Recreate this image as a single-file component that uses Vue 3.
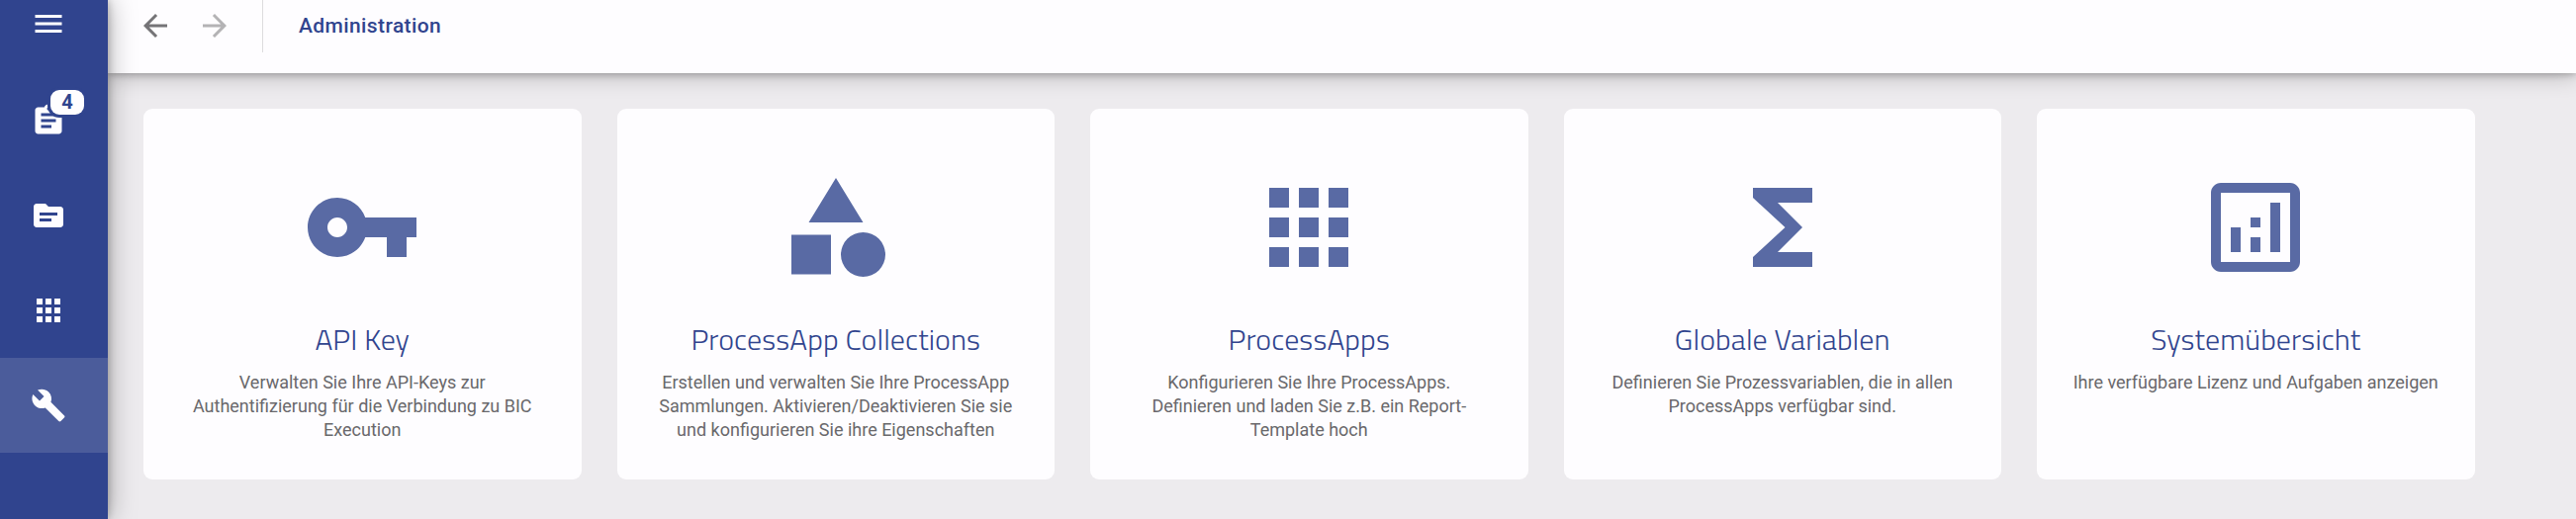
<template>
  <div class="app-shell">
    <nav class="sidebar">
      <button class="nav-item menu-btn" title="Menü">
        <svg class="nav-icon" viewBox="0 0 24 24"><path :d="icons.menu" /></svg>
      </button>
      <button
        v-for="item in navItems"
        :key="item.icon"
        class="nav-item"
        :class="{ 'is-active': item.icon === activeItem }"
        :title="item.title"
        @click="activeItem = item.icon"
      >
        <span class="icon-wrap">
          <svg class="nav-icon" viewBox="0 0 24 24"><path :d="icons[item.icon]" /></svg>
          <span v-if="item.badge" class="badge">{{ item.badge }}</span>
        </span>
      </button>
    </nav>

    <div class="main">
      <header class="toolbar">
        <button class="history-btn" title="Zurück">
          <svg class="nav-icon" viewBox="0 0 24 24"><path :d="icons.back" /></svg>
        </button>
        <button class="history-btn" title="Vorwärts" disabled>
          <svg class="nav-icon" viewBox="0 0 24 24"><path :d="icons.forward" /></svg>
        </button>
        <span class="divider"></span>
        <h1 class="page-title">Administration</h1>
      </header>

      <main class="tiles">
        <article v-for="tile in tiles" :key="tile.title" class="tile">
          <svg class="tile-icon" viewBox="0 0 24 24"><path :d="icons[tile.icon]" /></svg>
          <h2 class="tile-title">{{ tile.title }}</h2>
          <p class="tile-text">{{ tile.text }}</p>
        </article>
      </main>
    </div>
  </div>
</template>

<script setup>
import { ref } from 'vue';

const icons = {
  menu: 'M3 18h18v-2H3v2zm0-5h18v-2H3v2zm0-7v2h18V6H3z',
  back: 'M20 11H7.83l5.59-5.59L12 4l-8 8 8 8 1.41-1.41L7.83 13H20v-2z',
  forward: 'M12 4l-1.41 1.41L16.17 11H4v2h12.17l-5.58 5.59L12 20l8-8z',
  tasks: 'M19 3h-4.18C14.4 1.84 13.3 1 12 1c-1.3 0-2.4.84-2.82 2H5c-1.1 0-2 .9-2 2v14c0 1.1.9 2 2 2h14c1.1 0 2-.9 2-2V5c0-1.1-.9-2-2-2zm-7 0c.55 0 1 .45 1 1s-.45 1-1 1-1-.45-1-1 .45-1 1-1zm2 14H7v-2h7v2zm3-4H7v-2h10v2zm0-4H7V7h10v2z',
  cases: 'M20 6h-8l-2-2H4c-1.1 0-1.99.9-1.99 2L2 18c0 1.1.9 2 2 2h16c1.1 0 2-.9 2-2V8c0-1.1-.9-2-2-2zm-6 10H6v-2h8v2zm4-4H6v-2h12v2z',
  apps: 'M4 8h4V4H4v4zm6 12h4v-4h-4v4zm-6 0h4v-4H4v4zm0-6h4v-4H4v4zm6 0h4v-4h-4v4zm6-10v4h4V4h-4zm-6 4h4V4h-4v4zm6 6h4v-4h-4v4zm0 6h4v-4h-4v4z',
  build: 'M22.7 19l-9.1-9.1c.9-2.3.4-5-1.5-6.9-2-2-5-2.4-7.4-1.3L9 6 6 9 1.6 4.7C.4 7.1.9 10.1 2.9 12.1c1.9 1.9 4.6 2.4 6.9 1.5l9.1 9.1c.4.4 1 .4 1.4 0l2.3-2.3c.5-.4.5-1.1.1-1.4z',
  key: 'M12.65 10C11.83 7.67 9.61 6 7 6c-3.31 0-6 2.69-6 6s2.69 6 6 6c2.61 0 4.83-1.67 5.65-4H17v4h4v-4h2v-4H12.65zM7 14c-1.1 0-2-.9-2-2s.9-2 2-2 2 .9 2 2-.9 2-2 2z',
  category: 'M12 2l-5.5 9h11zM17.5 13a4.5 4.5 0 1 0 0 9 4.5 4.5 0 0 0 0-9zM3 13.5h8v8H3z',
  functions: 'M18 4H6v2l6.5 6L6 18v2h12v-3h-7l5-5-5-5h7z',
  analytics: 'M19 3H5c-1.1 0-2 .9-2 2v14c0 1.1.9 2 2 2h14c1.1 0 2-.9 2-2V5c0-1.1-.9-2-2-2zm0 16H5V5h14v14zM7 12h2v5H7zM15 7h2v10h-2zM11 14h2v3h-2zM11 10h2v2h-2z'
};

const activeItem = ref('build');

const navItems = [
  { icon: 'tasks', title: 'Aufgaben', badge: 4 },
  { icon: 'cases', title: 'Fälle' },
  { icon: 'apps', title: 'ProcessApps' },
  { icon: 'build', title: 'Administration' }
];

const tiles = [
  {
    icon: 'key',
    title: 'API Key',
    text: 'Verwalten Sie Ihre API-Keys zur Authentifizierung für die Verbindung zu BIC Execution'
  },
  {
    icon: 'category',
    title: 'ProcessApp Collections',
    text: 'Erstellen und verwalten Sie Ihre ProcessApp Sammlungen. Aktivieren/Deaktivieren Sie sie und konfigurieren Sie ihre Eigenschaften'
  },
  {
    icon: 'apps',
    title: 'ProcessApps',
    text: 'Konfigurieren Sie Ihre ProcessApps. Definieren und laden Sie z.B. ein Report-Template hoch'
  },
  {
    icon: 'functions',
    title: 'Globale Variablen',
    text: 'Definieren Sie Prozessvariablen, die in allen ProcessApps verfügbar sind.'
  },
  {
    icon: 'analytics',
    title: 'Systemübersicht',
    text: 'Ihre verfügbare Lizenz und Aufgaben anzeigen'
  }
];
</script>

<style>
body {
  margin: 0;
  overflow: hidden;
}
</style>

<style scoped>
.app-shell {
  display: flex;
  height: 100vh;
  overflow: hidden;
  background-color: #edebee;
  font-family: Roboto, "Liberation Sans", sans-serif;
}

button {
  margin: 0;
  padding: 0;
  border: none;
  background: none;
  color: inherit;
  font: inherit;
  cursor: pointer;
}

/* Sidebar */
.sidebar {
  z-index: 2;
  display: flex;
  flex-direction: column;
  flex: none;
  width: 109px;
  background-color: #30448e;
  color: #fefdff;
  box-shadow: 0 0 8px rgba(0, 0, 0, 0.25), 0 0 26px rgba(0, 0, 0, 0.35);
}

.nav-item {
  display: flex;
  align-items: center;
  height: 96px;
  padding-left: 31px;
}

.nav-item.is-active {
  background-color: #4b5c9b;
}

.menu-btn {
  height: 48px;
  margin-bottom: 26px;
}

.nav-icon {
  display: block;
  width: 36px;
  height: 36px;
  fill: currentColor;
}

.icon-wrap {
  position: relative;
}

.badge {
  position: absolute;
  top: -13px;
  left: 20px;
  width: 34px;
  height: 25px;
  border-radius: 9px;
  background-color: #fefdff;
  box-shadow: 0 0 0 3px #30448e;
  color: #30448e;
  font-size: 20px;
  font-weight: 700;
  line-height: 25px;
  text-align: center;
}

/* Toolbar */
.main {
  flex: 1;
  min-width: 0;
}

.toolbar {
  display: flex;
  align-items: center;
  box-sizing: border-box;
  height: 74px;
  padding: 0 0 22px 30px;
  background-color: #fefdff;
  box-shadow: 0 0 8px rgba(0, 0, 0, 0.3), 0 0 24px rgba(0, 0, 0, 0.3);
}

.history-btn {
  margin-right: 24px;
  color: #757477;
}

.history-btn:disabled {
  color: #b4b3b5;
  cursor: default;
}

.divider {
  align-self: flex-start;
  width: 1px;
  height: 53px;
  margin-left: 6px;
  background-color: #dddcde;
}

.page-title {
  margin: 0 0 0 36px;
  color: #30448e;
  font-size: 21px;
  font-weight: 500;
  line-height: 30px;
  letter-spacing: 0.4px;
}

/* Tiles */
.tiles {
  display: flex;
  gap: 36px;
  padding: 36px;
}

.tile {
  display: flex;
  flex-direction: column;
  align-items: center;
  flex: none;
  box-sizing: border-box;
  width: 442.5px;
  height: 375px;
  padding: 60px 36px 0;
  border-radius: 9px;
  background-color: #fefdff;
  text-align: center;
}

.tile-icon {
  flex: none;
  width: 120px;
  height: 120px;
  fill: #596aa4;
}

.tile-title {
  margin: 35px 0 0;
  color: #30448e;
  font-family: "Titillium Web", Roboto, sans-serif;
  font-size: 30px;
  font-weight: 300;
  line-height: 36px;
  letter-spacing: 0.1px;
}

.tile-text {
  margin: 14px 0 0;
  color: #69686b;
  font-size: 18px;
  line-height: 24px;
}
</style>
